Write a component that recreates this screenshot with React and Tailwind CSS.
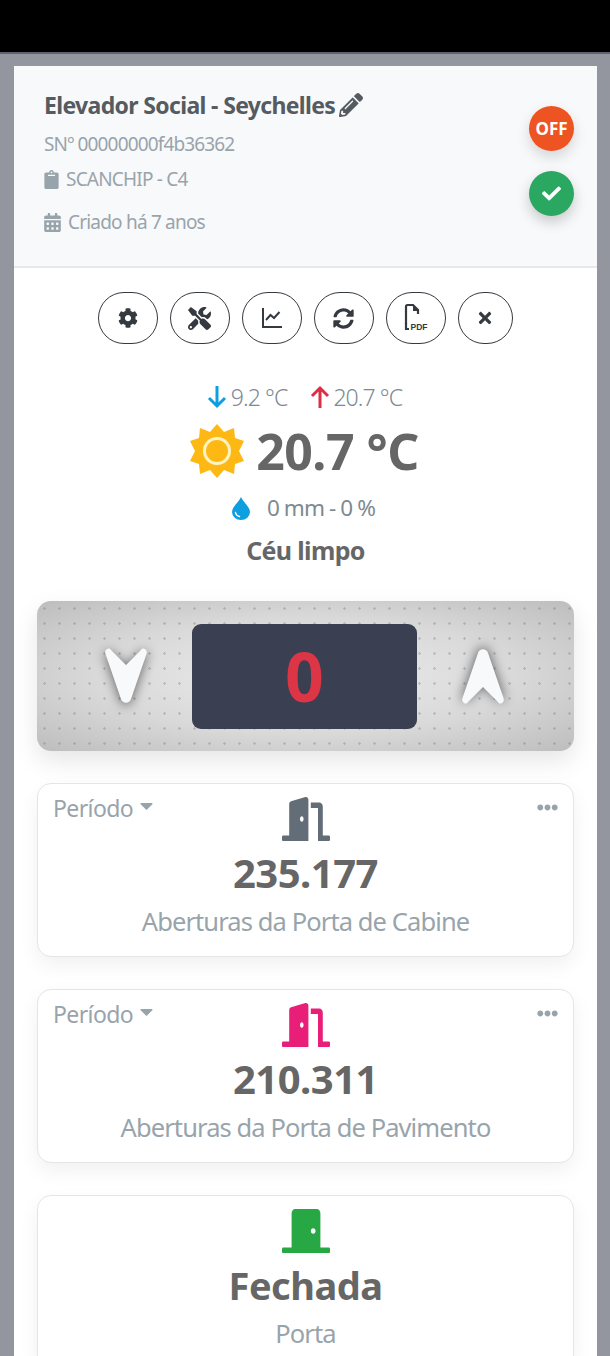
import { FaPencilAlt, FaClipboard, FaCalendarAlt, FaCheck, FaCog, FaTools, FaSyncAlt, FaTimes, FaDoorOpen, FaDoorClosed, FaEllipsisH, FaCaretDown } from "react-icons/fa";

const ActionButton = ({ children, wide = true }) => {
  return (
    <button className={`flex h-[52px] items-center justify-center rounded-full border-[1.500px] border-[#343a40] text-[#343a40] ${wide ? "w-[60px]" : "w-[55px]"}`}>
      {children}
    </button>
  );
};

const ChartIcon = () => (
  <svg width="22" height="22" viewBox="0 0 22 22" fill="none" stroke="#343a40" strokeWidth="2">
    <path d="M2 1V20H21" />
    <path d="M5 13L9.500 8L13 11L18.500 5" />
  </svg>
);

const PdfIcon = () => (
  <svg width="26" height="30" viewBox="0 0 26 30" fill="none">
    <path d="M3 21V3.500C3 2.500 3.800 2 4.500 2H10L15 7V11" stroke="#343a40" strokeWidth="2.200" />
    <path d="M10 2L15.500 8H10Z" fill="#343a40" />
    <path d="M3 20V26H6" stroke="#343a40" strokeWidth="2.200" />
    <text x="7.500" y="27" fontSize="8.500" fontWeight="700" fill="#343a40" fontFamily="Liberation Sans, sans-serif">PDF</text>
  </svg>
);

const SunIcon = () => (
  <svg width="56" height="56" viewBox="0 0 56 56">
    <polygon
      fill="#fdb813"
      points="28,1 35,9 45,5 46,15 55,18 50,28 55,38 46,41 45,51 35,47 28,55 21,47 11,51 10,41 1,38 6,28 1,18 10,15 11,5 21,9"
    />
    <circle cx="28" cy="28" r="14" fill="#fff3c4" />
    <circle cx="28" cy="28" r="11" fill="#fdb813" />
  </svg>
);

const DropIcon = () => (
  <svg width="20" height="24" viewBox="0 0 20 24">
    <path d="M10 1C8 6 1 11 1 16a9 8 0 0 0 18 0C19 11 12 6 10 1Z" fill="#0d9fe0" />
    <path d="M4.500 16.500c.3 2 1.700 3.500 4 4" stroke="#fff" strokeWidth="1.400" fill="none" strokeLinecap="round" />
  </svg>
);

const ThinArrow = ({ up, color }) => (
  <svg width="20" height="24" viewBox="0 0 20 24" fill="none" stroke={color} strokeWidth="3" className={up ? "" : "rotate-180"}>
    <path d="M10 23V3M2 11l8-8 8 8" />
  </svg>
);

const LiftArrow = ({ up }) => (
  <svg width="48" height="60" viewBox="0 0 48 60" className={`drop-shadow-[0_2px_6px_rgba(0,0,0,0.55)] ${up ? "rotate-180" : ""}`}>
    <path
      d="M4 4c1.500-2 4-2 5 0l15 15L39 4c1-2 3.500-2 5 0 1 1 1 2 .5 4L29 53c-1.500 5-8.500 5-10 0L3.500 8C3 6 3 5 4 4Z"
      fill="#f8f9fb"
    />
  </svg>
);

const StatCard = ({ icon, value, label, period, valueClass = "text-[40px]" }) => {
  return (
    <div className="relative mx-[23px] mb-[32px] h-[174px] shrink-0 rounded-[14px] border border-[#e3e5e8] bg-white pt-[13px] text-center shadow-[0_8px_20px_rgba(0,0,0,0.06)]">
      {period && (
        <>
          <div className="absolute left-[15px] top-[8px] flex items-center gap-[3px] text-[23px] leading-[32px] tracking-[-0.6px] text-[#98a4ab]">
            Período <FaCaretDown className="mb-[5px] text-[21px] text-[#98a4ab]" />
          </div>
          <FaEllipsisH className="absolute right-[15px] top-[13px] text-[21px] text-[#98a4ab]" />
        </>
      )}
      <div className="flex h-[44px] justify-center">{icon}</div>
      <div className={`mt-[7px] font-bold leading-[50px] tracking-[-0.5px] text-[#666] ${valueClass}`}>{value}</div>
      <div className="mt-[6px] text-[25.500px] leading-[34px] tracking-[-0.9px] text-[#98a4ab]">{label}</div>
    </div>
  );
};

export default function App() {
  return (
    <div className="flex h-[1356px] flex-col overflow-hidden bg-[#94969f] font-['Noto_Sans',sans-serif]">
      <div className="h-[52px] shrink-0 bg-black" />
      <div className="h-[2px] shrink-0 bg-[#5f6270]" />

      <div className="ml-[14px] mr-[13px] mt-[12px] flex flex-1 flex-col overflow-hidden bg-white">
        {/* Header */}
        <div className="flex h-[202px] shrink-0 justify-between border-b-2 border-[#e6e8ea] bg-[#f8f9fa] pl-[30px] pr-[23px]">
          <div className="pt-[23px] text-[#98a4ab]">
            <div className="flex items-center gap-[4px] text-[#555b60]">
              <span className="text-[23px] font-bold leading-[32px] tracking-[-0.65px]">Elevador Social - Seychelles</span>
              <FaPencilAlt className="text-[24px]" />
            </div>
            <div className="mt-[10px] text-[19px] leading-[26px] tracking-[-0.85px]">SNº 00000000f4b36362</div>
            <div className="mt-[9px] flex items-center gap-[5px] text-[19px] leading-[26px] tracking-[-0.8px]">
              <FaClipboard className="-ml-[2px] text-[19px]" /> SCANCHIP - C4
            </div>
            <div className="mt-[17px] flex items-center gap-[6px] text-[19px] leading-[26px] tracking-[-0.8px]">
              <FaCalendarAlt className="-ml-[1px] text-[19px]" /> Criado há 7 anos
            </div>
          </div>
          <div className="flex flex-col gap-[20px] pt-[40px]">
            <div className="flex h-[45px] w-[45px] items-center justify-center rounded-full bg-[#ee5322] text-[17px] font-bold text-white shadow-[0_6px_14px_rgba(0,0,0,0.15)]">OFF</div>
            <div className="flex h-[45px] w-[45px] items-center justify-center rounded-full bg-[#2aa760] text-[19px] text-white shadow-[0_6px_14px_rgba(0,0,0,0.2)]">
              <FaCheck />
            </div>
          </div>
        </div>

        {/* Actions */}
        <div className="mt-[24px] flex shrink-0 justify-center gap-[12px] pr-[1px]">
          <ActionButton><FaCog className="text-[20px]" /></ActionButton>
          <ActionButton><FaTools className="text-[23px]" /></ActionButton>
          <ActionButton><ChartIcon /></ActionButton>
          <ActionButton><FaSyncAlt className="text-[21px]" /></ActionButton>
          <ActionButton><PdfIcon /></ActionButton>
          <ActionButton wide={false}><FaTimes className="text-[18px]" /></ActionButton>
        </div>

        {/* Weather */}
        <div className="mt-[37px] flex shrink-0 flex-col items-center">
          <div className="flex h-[32px] items-center pr-[2px] text-[23px] font-light tracking-[-0.9px] text-[#7d8a93]">
            <ThinArrow color="#0d9fe0" />
            <span className="ml-[4px]">9.2 °C</span>
            <span className="ml-[23px]"><ThinArrow up color="#dc2f45" /></span>
            <span className="ml-[3px]">20.7 °C</span>
          </div>
          <div className="mt-[9px] flex h-[58px] items-center gap-[11px] pr-[3px]">
            <SunIcon />
            <span className="text-[50px] font-bold leading-[58px] tracking-[-0.5px] text-[#666]">20.7 °C</span>
          </div>
          <div className="mt-[12px] flex h-[32px] items-center gap-[16px] pr-[5px] text-[22.500px] tracking-[-0.9px] text-[#7d8a93]">
            <DropIcon />
            <span>0 mm - 0 %</span>
          </div>
          <div className="mt-[10px] text-[25px] font-bold leading-[32px] tracking-[-0.65px] text-[#666]">Céu limpo</div>
        </div>

        {/* Elevator panel */}
        <div className="mx-[23px] mt-[35px] flex h-[150px] shrink-0 items-center justify-between rounded-[14px] bg-[radial-gradient(circle,rgba(120,120,120,0.35)_1px,transparent_1.500px),radial-gradient(ellipse_at_center,#ececec_0%,#d9d9d9_55%,#bdbdbd_100%)] bg-[size:15px_15px,100%_100%] pl-[65px] pr-[67px] shadow-[0_10px_24px_rgba(0,0,0,0.1)]">
          <LiftArrow />
          <div className="flex h-[105px] w-[225px] items-center justify-center rounded-[9px] bg-[#3a3f51] text-[68px] font-bold text-[#dc3545]">0</div>
          <LiftArrow up />
        </div>

        {/* Cards */}
        <div className="mt-[32px] flex flex-col">
          <StatCard period icon={<FaDoorOpen preserveAspectRatio="none" className="h-[44px] w-[48px] text-[#626d77]" />} value="235.177" label="Aberturas da Porta de Cabine" />
          <StatCard period icon={<FaDoorOpen preserveAspectRatio="none" className="h-[44px] w-[48px] text-[#e91e78]" />} value="210.311" label="Aberturas da Porta de Pavimento" />
          <StatCard icon={<FaDoorClosed preserveAspectRatio="none" className="h-[44px] w-[48px] text-[#28a745]" />} value="Fechada" label="Porta" valueClass="text-[38px]" />
        </div>
      </div>
    </div>
  );
}
